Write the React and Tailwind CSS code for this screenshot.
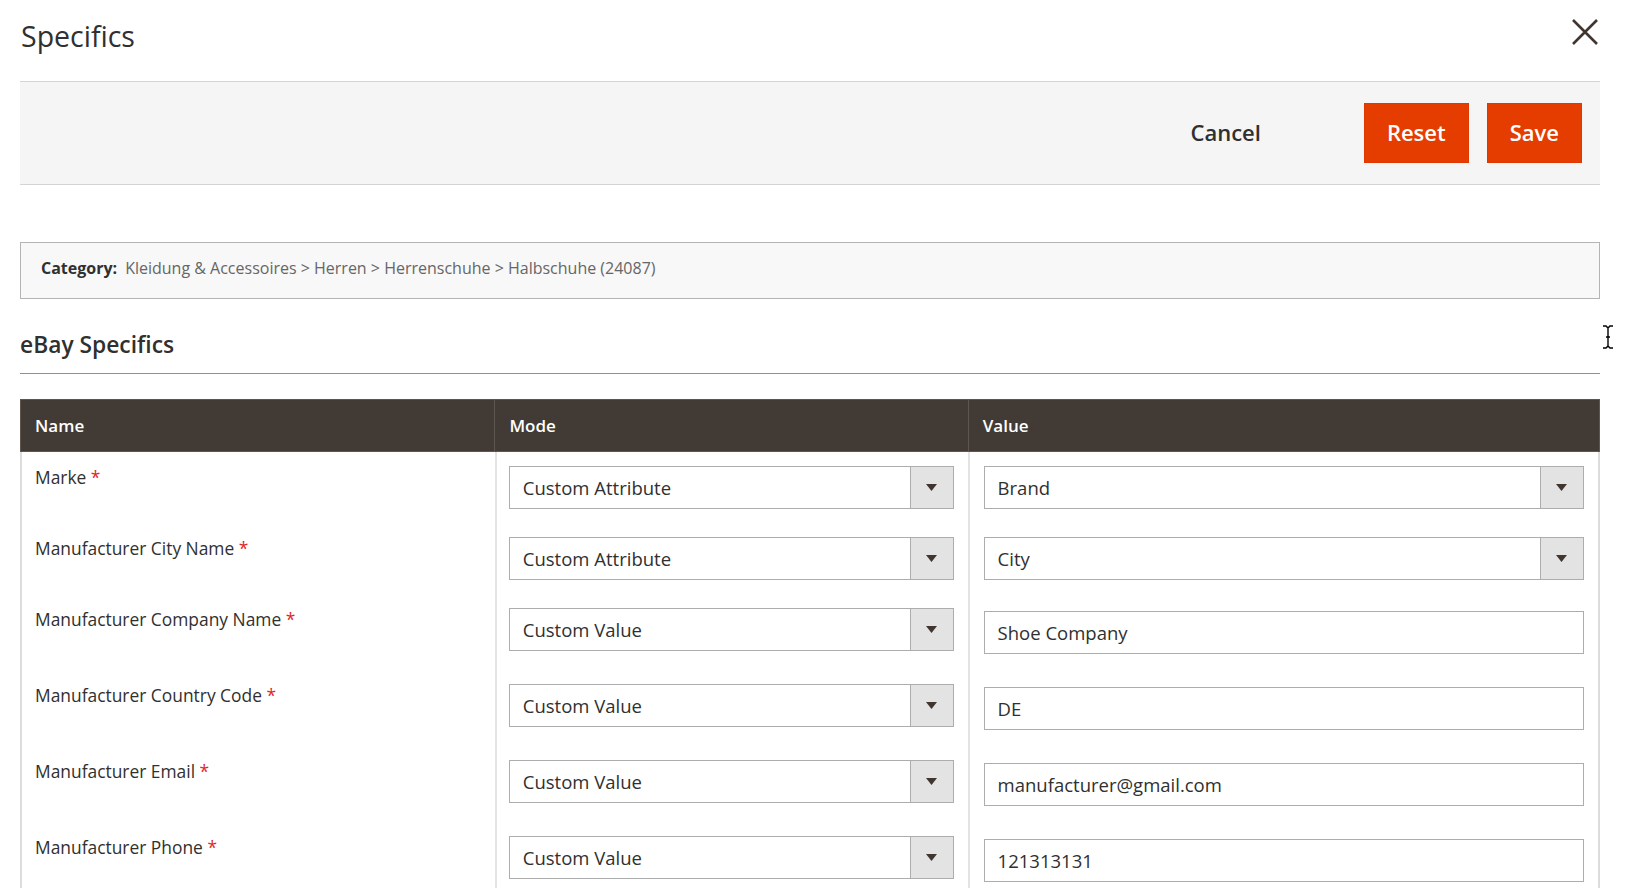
import React from 'react';

const rows = [
  { name: 'Marke', mode: 'Custom Attribute', value: 'Brand', type: 'select' },
  { name: 'Manufacturer City Name', mode: 'Custom Attribute', value: 'City', type: 'select' },
  { name: 'Manufacturer Company Name', mode: 'Custom Value', value: 'Shoe Company', type: 'input' },
  { name: 'Manufacturer Country Code', mode: 'Custom Value', value: 'DE', type: 'input' },
  { name: 'Manufacturer Email', mode: 'Custom Value', value: 'manufacturer@gmail.com', type: 'input' },
  { name: 'Manufacturer Phone', mode: 'Custom Value', value: '121313131', type: 'input' },
];

const Select = ({ value }) => (
  <div className="flex h-[43px] border border-[#adadad] bg-white">
    <div className="flex-1 flex items-center pl-[13px] text-[18.5px] text-[#303030]">{value}</div>
    <div className="w-[43px] flex items-center justify-center bg-[#e3e3e3] border-l border-[#adadad]">
      <svg width="11" height="7" viewBox="0 0 11 7">
        <path d="M0 0 L11 0 L5.5 7 Z" fill="#41362f" />
      </svg>
    </div>
  </div>
);

const Input = ({ value }) => (
  <div className="flex items-center h-[43px] border border-[#adadad] bg-white pl-[13px] text-[18.5px] text-[#303030]">
    {value}
  </div>
);

const App = () => {
  return (
    <div
      className="relative w-[1630px] h-[888px] overflow-hidden bg-white text-[#303030]"
      style={{ fontFamily: '"Open Sans", "Noto Sans", sans-serif' }}
    >
      <div className="pl-5 pr-[30px]">
        {/* modal header */}
        <div className="h-[81px] flex items-center justify-between">
          <h1 className="text-[28.5px] font-normal leading-none -mt-[8px] pl-[1px]">Specifics</h1>
          <button className="mr-[1px] -mt-[18px]">
            <svg width="28" height="28" viewBox="0 0 28 28">
              <path d="M2 2 L26 26 M26 2 L2 26" stroke="#41362f" strokeWidth="2.6" fill="none" />
            </svg>
          </button>
        </div>

        {/* actions bar */}
        <div className="h-[104px] flex items-center justify-end pr-[18px] bg-[#f5f5f5] border-y border-[#d4d4d4]">
          <button className="h-[60px] px-[23px] pb-[1px] text-[22px] font-semibold text-[#303030] mr-[80px]">Cancel</button>
          <button className="h-[60px] px-[22px] pb-[1px] text-[22px] font-semibold text-white bg-[#e53d00] border border-[#df3800] mr-[18px]">
            Reset
          </button>
          <button className="h-[60px] px-[22px] pb-[1px] text-[22px] font-semibold text-white bg-[#e53d00] border border-[#df3800]">
            Save
          </button>
        </div>

        {/* category */}
        <div className="mt-[57px] h-[57px] flex items-center px-5 pb-[5px] bg-[#f8f8f8] border border-[#b4b4b4] text-[16px]">
          <span className="font-bold text-[#303030]">Category:</span>
          <span className="ml-[8px] text-[#666666]">Kleidung &amp; Accessoires &gt; Herren &gt; Herrenschuhe &gt; Halbschuhe (24087)</span>
        </div>

        {/* section title */}
        <div className="mt-[31px] pb-[13px] border-b border-[#a08f6c]">
          <h2 className="text-[22.8px] font-semibold leading-[30px]">eBay Specifics</h2>
        </div>

        {/* table */}
        <div className="mt-[25px]">
          <div className="grid grid-cols-[30%_30%_40%] h-[53px] bg-[#423b35] border border-[#5e564e] text-white text-[17px] font-semibold">
            <div className="flex items-center px-[14px]">Name</div>
            <div className="flex items-center px-[14px] border-l border-[#5e564e]">Mode</div>
            <div className="flex items-center px-[14px] border-l border-[#5e564e]">Value</div>
          </div>
          {rows.map((r) => (
            <div key={r.name} className="grid grid-cols-[30%_30%_40%] border-x-2 border-[#dcdcdc]">
              <div className="px-[13px] pt-[14px] text-[17.4px] leading-[22px]">
                {r.name} <span className="text-[#e22626]">*</span>
              </div>
              <div className="pl-[12px] pr-[14px] pt-[14px] pb-[14px] border-l-2 border-[#e3e3e3]">
                <Select value={r.mode} />
              </div>
              {r.type === 'select' ? (
                <div className="px-[14px] pt-[14px] pb-[14px] border-l-2 border-[#e3e3e3]">
                  <Select value={r.value} />
                </div>
              ) : (
                <div className="px-[14px] pt-[17px] pb-[16px] border-l-2 border-[#e3e3e3]">
                  <Input value={r.value} />
                </div>
              )}
            </div>
          ))}
        </div>
      </div>

      {/* text cursor */}
      <svg className="absolute left-[1602px] top-[325px]" width="12" height="24" viewBox="0 0 12 24">
        <path d="M1 1 H4 L6 3 L8 1 H11 M6 3 V21 M1 23 H4 L6 21 L8 23 H11 M4 12 H8" stroke="#000" strokeWidth="1.4" fill="none" />
      </svg>
    </div>
  );
};

export default App;
